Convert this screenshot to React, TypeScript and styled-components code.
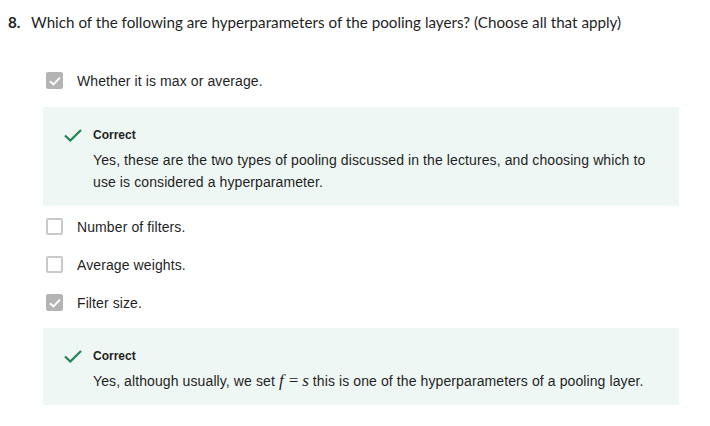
import React from "react";
import styled, { createGlobalStyle } from "styled-components";

const Global = createGlobalStyle`
  html, body { margin: 0; padding: 0; background: #fff; }
  body { font-family: "Liberation Sans", Arial, sans-serif; color: #1f1f1f; }
`;

const Page = styled.div`
  width: 710px;
  padding: 11px 0 0 8px;
  box-sizing: border-box;
`;

const Title = styled.div`
  display: flex;
  align-items: baseline;
  font-family: Lato, "Open Sans", sans-serif;
  font-size: 15.2px;
  line-height: 22px;
  color: #1f1f1f;
`;

const Num = styled.span`
  font-weight: 700;
  width: 23px;
  flex: none;
`;

const List = styled.div`
  display: flex;
  flex-direction: column;
  margin: 0 31px 0 35px;
`;

const Option = styled.label<{ $mt: number }>`
  display: flex;
  align-items: center;
  gap: 14px;
  height: 17px;
  margin-top: ${(p) => p.$mt}px;
  padding-left: 3px;
  font-size: 14px;
  letter-spacing: 0.1px;
  color: #1f1f1f;
`;

const Box = styled.span<{ $checked?: boolean }>`
  width: 17px;
  height: 17px;
  box-sizing: border-box;
  border-radius: 2px;
  flex: none;
  display: flex;
  align-items: center;
  justify-content: center;
  background: ${(p) => (p.$checked ? "#b4b4b4" : "#fff")};
  border: ${(p) => (p.$checked ? "none" : "2px solid #c9c9c9")};
`;

const Feedback = styled.div<{ $mt: number }>`
  margin-top: ${(p) => p.$mt}px;
  background: #eff7f4;
  padding: 19px 20px 13px 21px;
  display: grid;
  grid-template-columns: 29px 1fr;
`;

const Icon = styled.span`
  display: flex;
  align-items: center;
  height: 18px;
`;

const Head = styled.div`
  font-weight: 700;
  font-size: 12px;
  line-height: 18px;
  color: #1f1f1f;
`;

const Body = styled.div`
  grid-column: 2;
  margin-top: 5px;
  font-size: 14px;
  letter-spacing: 0.1px;
  line-height: 22px;
  color: #1f1f1f;
`;

const M = styled.span`
  font-family: "Liberation Serif", "Times New Roman", serif;
  font-size: 17px;
  letter-spacing: 0;
`;

const I = styled.i`
  font-style: italic;
`;

const Eq = styled.span`
  padding: 0 4px 0 5px;
`;

const Tick = ({ color = "#fff" }: { color?: string }) => (
  <svg width="12" height="10" viewBox="0 0 12 10">
    <path d="M1 5.2 L4.4 8.4 L11 1.6" fill="none" stroke={color} strokeWidth="2" />
  </svg>
);

const GreenCheck = () => (
  <svg width="18" height="13" viewBox="0 0 18 13">
    <path d="M1 6.5 L6.3 11.5 L17 1" fill="none" stroke="#1f8354" strokeWidth="2.2" />
  </svg>
);

const Correct = ({ mt, children }: { mt: number; children: React.ReactNode }) => (
  <Feedback $mt={mt}>
    <Icon>
      <GreenCheck />
    </Icon>
    <Head>Correct</Head>
    <Body>{children}</Body>
  </Feedback>
);

export default function App() {
  return (
    <Page>
      <Global />
      <Title>
        <Num>8.</Num>
        <span>Which of the following are hyperparameters of the pooling layers? (Choose all that apply)</span>
      </Title>
      <List>
        <Option $mt={39}>
          <Box $checked>
            <Tick />
          </Box>
          Whether it is max or average.
        </Option>
        <Correct mt={18}>
          Yes, these are the two types of pooling discussed in the lectures, and choosing which to use is considered a
          hyperparameter.
        </Correct>
        <Option $mt={12}>
          <Box />
          Number of filters.
        </Option>
        <Option $mt={21}>
          <Box />
          Average weights.
        </Option>
        <Option $mt={21}>
          <Box $checked>
            <Tick />
          </Box>
          Filter size.
        </Option>
        <Correct mt={17}>
          Yes, although usually, we set{" "}
          <M>
            <I>f</I>
            <Eq>=</Eq>
            <I>s</I>
          </M>{" "}
          this is one of the hyperparameters of a pooling layer.
        </Correct>
      </List>
    </Page>
  );
}
